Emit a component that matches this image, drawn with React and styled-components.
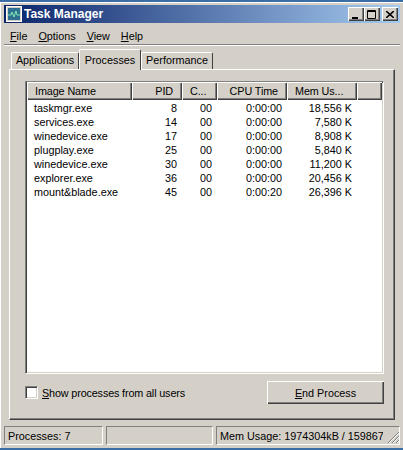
import React from 'react';
import styled, { createGlobalStyle } from 'styled-components';

const Global = createGlobalStyle`
	html, body { margin: 0; padding: 0; background: #3a6ea5; }
	* { box-sizing: border-box; }
`;

const Win = styled.div`
	width: 403px;
	height: 450px;
	padding-top: 2px;
	background: #3a6ea5;
	font-family: "Liberation Sans", Arial, sans-serif;
	font-size: 10.8px;
	line-height: 14px;
	color: #000;
	display: flex;
	flex-direction: column;
`;

const Frame = styled.div`
	flex: 1;
	background: #d4d0c8;
	box-shadow: inset 1px 1px 0 #fff;
	padding: 3px 0 0 4px;
	display: flex;
	flex-direction: column;
	min-height: 0;
	margin-bottom: 2px;
`;

const TitleBar = styled.div`
	height: 18px;
	margin-right: 3px;
	background: linear-gradient(to right, #0a246a, #a6caf0);
	display: flex;
	align-items: center;
	padding: 0 2px;
	color: #fff;
	font-weight: bold;
	font-size: 12px;
`;

const TitleText = styled.span`
	margin-left: 2px;
	flex: 1;
`;

const WinBtn = styled.div`
	width: 16px;
	height: 14px;
	background: #d4d0c8;
	box-shadow: inset 1px 1px 0 #fff, inset -1px -1px 0 #404040, inset -2px -2px 0 #808080;
	margin-left: ${p => (p.$gap ? '2px' : '0')};
	display: flex;
	align-items: center;
	justify-content: center;
`;

const MenuBar = styled.div`
	display: flex;
	gap: 11px;
	height: 21px;
	padding: 6px 0 0 6px;
	margin-right: 3px;
`;

const U = styled.span`
	text-decoration: underline;
`;

const Rule = styled.div`
	height: 2px;
	border-top: 1px solid #808080;
	border-bottom: 1px solid #fff;
	margin-right: 3px;
`;

const Tabs = styled.div`
	display: flex;
	align-items: flex-end;
	height: 20px;
	margin-top: 3px;
	padding-left: 7px;
	position: relative;
	z-index: 1;
`;

const Tab = styled.div`
	width: ${p => p.$w}px;
	height: ${p => (p.$active ? '21px' : '17px')};
	padding-top: ${p => (p.$active ? '3px' : '0')};
	text-align: center;
	margin-bottom: ${p => (p.$active ? '-1px' : '0')};
	background: #d4d0c8;
	border-left: 1px solid #fff;
	border-top: 1px solid #fff;
	border-right: 1px solid #404040;
	border-radius: 2px 2px 0 0;
	position: relative;
	z-index: ${p => (p.$active ? 2 : 0)};
`;

const Sheet = styled.div`
	height: 351px;
	margin: 0 8px 0 5px;
	border: 1px solid;
	border-color: #fff #404040 #404040 #fff;
	box-shadow: inset -1px -1px 0 #808080;
	padding: 11px 10px 0 15px;
`;

const List = styled.div`
	height: 293px;
	background: #fff;
	border: 1px solid;
	border-color: #808080 #fff #fff #808080;
	box-shadow: inset 1px 1px 0 #404040, inset -1px -1px 0 #d4d0c8;
	padding: 0 1px 0 1px;
`;

const HeadRow = styled.div`
	display: flex;
	height: 18px;
	margin-bottom: 1px;
`;

const HeadCell = styled.div`
	width: ${p => p.$w}px;
	flex: ${p => (p.$fill ? 1 : 'none')};
	background: #d4d0c8;
	box-shadow: inset 1px 1px 0 #fff, inset -1px -1px 0 #404040, inset -2px -2px 0 #808080;
	padding: 2px 9px 0 8px;
	text-align: ${p => (p.$right ? 'right' : 'left')};
	white-space: nowrap;
	overflow: hidden;
	letter-spacing: -0.1px;
`;

const Row = styled.div`
	display: flex;
	height: 14px;
`;

const Cell = styled.div`
	width: ${p => p.$w}px;
	padding: 0 5px 0 7px;
	text-align: ${p => (p.$right ? 'right' : 'left')};
	white-space: nowrap;
`;

const Below = styled.div`
	display: flex;
	align-items: center;
	justify-content: space-between;
	margin-top: 7px;
`;

const Check = styled.label`
	display: flex;
	align-items: center;
	gap: 4px;
	letter-spacing: -0.14px;
`;

const Box = styled.span`
	width: 13px;
	height: 13px;
	background: #fff;
	border: 1px solid;
	border-color: #808080 #fff #fff #808080;
	box-shadow: inset 1px 1px 0 #404040, inset -1px -1px 0 #d4d0c8;
`;

const Button = styled.div`
	width: 117px;
	height: 23px;
	background: #d4d0c8;
	box-shadow: inset 1px 1px 0 #fff, inset -1px -1px 0 #404040, inset -2px -2px 0 #808080;
	display: flex;
	align-items: center;
	justify-content: center;
`;

const Status = styled.div`
	display: flex;
	gap: 3px;
	height: 19px;
	margin: 6px 3px 0 0;
	position: relative;
`;

const Pane = styled.div`
	width: ${p => p.$w}px;
	flex: ${p => (p.$fill ? 1 : 'none')};
	border: 1px solid;
	border-color: #808080 #fff #fff #808080;
	padding: 2px 0 0 3px;
	min-width: 0;
`;

const PaneText = styled.div`
	margin-right: ${p => p.$clip || 0}px;
	white-space: nowrap;
	overflow: hidden;
`;

const Grip = styled.svg`
	position: absolute;
	right: 0;
	bottom: 1px;
`;

const columns = [
	{ title: 'Image Name', w: 105 },
	{ title: 'PID', w: 50, right: true },
	{ title: 'C...', w: 35 },
	{ title: 'CPU Time', w: 70, right: true },
	{ title: 'Mem Us...', w: 70 },
];

const processes = [
	['taskmgr.exe', '8', '00', '0:00:00', '18,556 K'],
	['services.exe', '14', '00', '0:00:00', '7,580 K'],
	['winedevice.exe', '17', '00', '0:00:00', '8,908 K'],
	['plugplay.exe', '25', '00', '0:00:00', '5,840 K'],
	['winedevice.exe', '30', '00', '0:00:00', '11,200 K'],
	['explorer.exe', '36', '00', '0:00:00', '20,456 K'],
	['mount&blade.exe', '45', '00', '0:00:20', '26,396 K'],
];

function TaskIcon() {
	return (
		<svg width="16" height="16" viewBox="0 0 16 16">
			<rect x="0.5" y="0.5" width="15" height="15" fill="#d4d0c8" stroke="#fff" />
			<rect x="2" y="2" width="12" height="12" fill="#2f6f8f" />
			<path d="M2 9h3l1-3 2 5 2-6 1 4h3" fill="none" stroke="#7fe8b0" />
		</svg>
	);
}

export default function App() {
	return (
		<Win>
			<Global />
			<Frame>
				<TitleBar>
					<TaskIcon />
					<TitleText>Task Manager</TitleText>
					<WinBtn>
						<svg width="10" height="9"><rect x="1" y="7" width="6" height="2" fill="#000" /></svg>
					</WinBtn>
					<WinBtn>
						<svg width="10" height="9"><path d="M.5 .5h8v8h-8zM.5 1.5h8" fill="none" stroke="#000" /></svg>
					</WinBtn>
					<WinBtn $gap>
						<svg width="8" height="7"><path d="M0 0l8 7M8 0l-8 7" stroke="#000" strokeWidth="1.6" /></svg>
					</WinBtn>
				</TitleBar>
				<MenuBar>
					<span><U>F</U>ile</span>
					<span><U>O</U>ptions</span>
					<span><U>V</U>iew</span>
					<span><U>H</U>elp</span>
				</MenuBar>
				<Rule />
				<Tabs>
					<Tab $w={68}>Applications</Tab>
					<Tab $w={62} $active>Processes</Tab>
					<Tab $w={72}>Performance</Tab>
				</Tabs>
				<Sheet>
					<List>
						<HeadRow>
							{columns.map(c => (
								<HeadCell key={c.title} $w={c.w} $right={c.right}>{c.title}</HeadCell>
							))}
							<HeadCell $fill />
						</HeadRow>
						{processes.map((p, i) => (
							<Row key={i}>
								<Cell $w={105}>{p[0]}</Cell>
								<Cell $w={50} $right>{p[1]}</Cell>
								<Cell $w={35} $right>{p[2]}</Cell>
								<Cell $w={70} $right>{p[3]}</Cell>
								<Cell $w={70} $right>{p[4]}</Cell>
							</Row>
						))}
					</List>
					<Below>
						<Check><Box /><span><U>S</U>how processes from all users</span></Check>
						<Button><span><U>E</U>nd Process</span></Button>
					</Below>
				</Sheet>
				<Status>
					<Pane $w={99}><PaneText>Processes: 7</PaneText></Pane>
					<Pane $w={107} />
					<Pane $fill><PaneText $clip={16}>Mem Usage: 1974304kB / 1598672</PaneText></Pane>
					<Grip width="13" height="13" viewBox="0 0 13 13">
						<path d="M12 1L1 12M12 5L5 12M12 9L9 12" stroke="#808080" strokeWidth="1" />
						<path d="M12 2L2 12M12 6L6 12M12 10L10 12" stroke="#fff" strokeWidth="1" />
					</Grip>
				</Status>
			</Frame>
		</Win>
	);
}
